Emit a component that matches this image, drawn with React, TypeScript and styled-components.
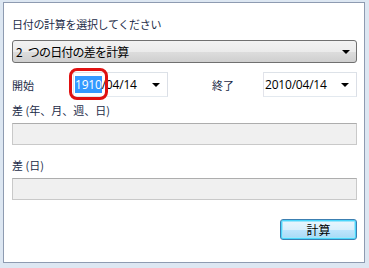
import React from "react";
import styled, { createGlobalStyle } from "styled-components";

const GlobalStyle = createGlobalStyle`
  html, body {
    margin: 0;
    padding: 0;
    background: #dde7f2;
  }
  body {
    font-family: "Noto Sans CJK JP", "Open Sans", sans-serif;
  }
`;

const Window = styled.div`
  width: 369px;
  height: 268px;
  padding: 2px 3px 0 3px;
  box-sizing: border-box;
`;

const Panel = styled.div`
  width: 362px;
  height: 261px;
  box-sizing: border-box;
  background: #ffffff;
  border: 1px solid #8e9bb1;
  padding: 11px 7px 0 8px;
  display: flex;
  flex-direction: column;
`;

const Label = styled.div<{ $top?: number; $spacing?: number }>`
  height: 20px;
  line-height: 20px;
  margin-top: ${(p) => p.$top ?? 0}px;
  font-size: 11px;
  letter-spacing: ${(p) => p.$spacing ?? 0}px;
  color: #1c2c48;
  white-space: nowrap;
`;

const Select = styled.div`
  margin-top: 6px;
  height: 23px;
  box-sizing: border-box;
  border: 1px solid #707070;
  border-radius: 3px;
  background: linear-gradient(
    to bottom,
    #f2f2f2 0%,
    #ebebeb 50%,
    #dddddd 51%,
    #cfcfcf 100%
  );
  display: flex;
  align-items: center;
  padding: 0 6px 0 3px;
  font-size: 12px;
  letter-spacing: -0.8px;
  word-spacing: 4px;
  color: #000;
`;

const SelectText = styled.span`
  flex: 1;
`;

const Arrow = styled.span`
  width: 0;
  height: 0;
  border-left: 4px solid transparent;
  border-right: 4px solid transparent;
  border-top: 4px solid #000;
`;

const DateRow = styled.div`
  margin-top: 9px;
  height: 25px;
  display: flex;
  align-items: center;
`;

const RowLabel = styled.div<{ $width: number }>`
  width: ${(p) => p.$width}px;
  font-size: 11px;
  color: #1c2c48;
`;

const EndGroup = styled.div`
  margin-left: auto;
  display: flex;
  align-items: center;
`;

const DatePicker = styled.div<{ $width: number }>`
  position: relative;
  width: ${(p) => p.$width}px;
  height: 25px;
  box-sizing: border-box;
  border: 1px solid #abadb3;
  border-top-color: #dde2e8;
  border-left-color: #e2e3ea;
  border-right-color: #dbdfe6;
  border-bottom-color: #e3e9ef;
  background: #fff;
  display: flex;
  align-items: center;
  padding: 0 7px 0 1px;
  font-family: "Open Sans", "Liberation Sans", sans-serif;
  font-size: 12px;
  letter-spacing: -0.2px;
  color: #000;
`;

const DateText = styled.span`
  flex: 1;
`;

const Selected = styled.span`
  background: #3399ff;
  color: #fff;
`;

const Highlight = styled.div`
  position: absolute;
  left: -5px;
  top: -5px;
  width: 39px;
  height: 32px;
  box-sizing: border-box;
  border: 3px solid #e01111;
  border-radius: 8px;
  pointer-events: none;
`;

const ReadOnlyField = styled.div<{ $top: number }>`
  margin-top: ${(p) => p.$top}px;
  height: 22px;
  box-sizing: border-box;
  background: #f0f0f0;
  border: 1px solid #c9c9c9;
  border-top-color: #adadad;
`;

const Footer = styled.div`
  margin-top: 19px;
  display: flex;
  justify-content: flex-end;
`;

const Button = styled.button`
  width: 77px;
  height: 21px;
  box-sizing: border-box;
  border: 1px solid #3c7fb1;
  border-radius: 3px;
  background: linear-gradient(
    to bottom,
    #eaf6fd 0%,
    #d9f0fc 50%,
    #bee6fd 51%,
    #a7d9f5 100%
  );
  box-shadow: inset 0 0 0 1px #4ad6fb, inset 0 0 0 2px #9fe6fb;
  font-family: "Noto Sans CJK JP", sans-serif;
  font-size: 12px;
  color: #000;
  padding: 0;
  line-height: 18px;
`;

export default function App() {
  return (
    <Window>
      <GlobalStyle />
      <Panel>
        <Label $spacing={-0.3}>日付の計算を選択してください</Label>
        <Select>
          <SelectText>2 つの日付の差を計算</SelectText>
          <Arrow />
        </Select>
        <DateRow>
          <RowLabel $width={61}>開始</RowLabel>
          <DatePicker $width={95}>
            <DateText>
              <Selected>1910</Selected>/04/14
            </DateText>
            <Arrow />
            <Highlight />
          </DatePicker>
          <EndGroup>
            <RowLabel $width={51}>終了</RowLabel>
            <DatePicker $width={94}>
              <DateText>2010/04/14</DateText>
              <Arrow />
            </DatePicker>
          </EndGroup>
        </DateRow>
        <Label $top={3}>差 (年、月、週、日)</Label>
        <ReadOnlyField $top={3} />
        <Label $top={10}>差 (日)</Label>
        <ReadOnlyField $top={3} />
        <Footer>
          <Button>計算</Button>
        </Footer>
      </Panel>
    </Window>
  );
}
